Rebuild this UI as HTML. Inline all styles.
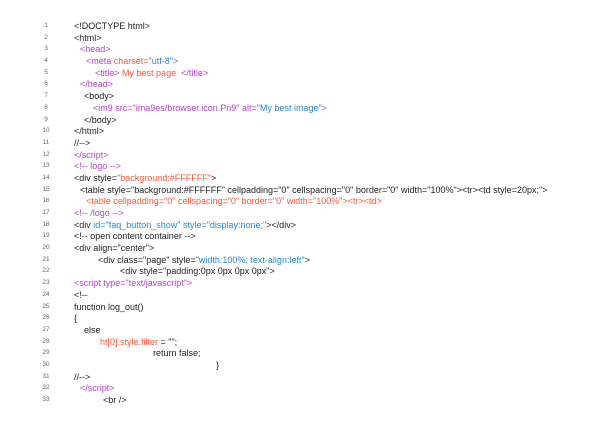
<!DOCTYPE html>
<html><head><style>
body{margin:0;width:612px;height:428px;background:#fff;overflow:hidden;font-family:"Liberation Sans",sans-serif;font-size:9px;color:#222;}
.l{position:absolute;white-space:pre;line-height:12px;}
.n{position:absolute;left:38px;width:16px;text-align:center;font-size:6.5px;color:#666;line-height:12px;}
.p{color:#b542c8}.o{color:#f25a3c}.b{color:#2a88cc}
</style></head><body>
<div id="c"></div>
<script>
var L=[
[74,'&lt;!DOCTYPE html&gt;'],
[74,'&lt;html&gt;'],
[80,'<span class="p">&lt;head&gt;</span>'],
[86,'<span class="p">&lt;meta </span><span class="o">charset=</span><span class="b">"utf-8"</span><span class="p">&gt;</span>'],
[95,'<span class="p">&lt;title&gt;</span> <span class="o">My best page</span>  <span class="p">&lt;/title&gt;</span>'],
[80,'<span class="p">&lt;/head&gt;</span>'],
[84,'&lt;body&gt;'],
[93,'<span class="p">&lt;im9 src=</span><span class="p">"ima9es/browser.icon.Pn9"</span><span class="p"> alt=</span><span class="b">"My best image"</span><span class="p">&gt;</span>'],
[84,'&lt;/body&gt;'],
[74,'&lt;/html&gt;'],
[74,'//--&gt;'],
[74,'<span class="p">&lt;/script&gt;</span>'],
[74,'<span class="p">&lt;!-- logo --&gt;</span>'],
[74,'&lt;div style=<span class="o">"background:#FFFFFF"</span>&gt;'],
[80,'&lt;table style="background:#FFFFFF" cellpadding="0" cellspacing="0" border="0" width="100%"&gt;&lt;tr&gt;&lt;td style=20px;"&gt;'],
[86,'<span class="o">&lt;table cellpadding="0" cellspacing="0" border="0" width="100%"&gt;&lt;tr&gt;&lt;td&gt;</span>'],
[74,'<span class="p">&lt;!-- /logo --&gt;</span>'],
[74,'&lt;div <span class="b">id="faq_button_show" style="display:none;"</span>&gt;&lt;/div&gt;'],
[74,'&lt;!-- open content container --&gt;'],
[74,'&lt;div align="center"&gt;'],
[98,'&lt;div class="page" style=<span class="b">"width:100%; text-align:left"</span>&gt;'],
[120,'&lt;div style="padding:0px 0px 0px 0px"&gt;'],
[74,'<span class="p">&lt;script type="text/javascript"&gt;</span>'],
[74,'&lt;!--'],
[74,'function log_out()'],
[74,'{'],
[84,'else'],
[100,'<span class="o">ht[0].style.filter</span> = "";'],
[153,'return false;'],
[216,'}'],
[74,'//--&gt;'],
[80,'<span class="p">&lt;/script&gt;</span>'],
[103,'&lt;br /&gt;']];
var h='';
for(var i=0;i<L.length;i++){var y=20+i*11.69;
h+='<div class="n" style="top:'+y+'px">'+(i+1)+'</div><div class="l" style="left:'+L[i][0]+'px;top:'+y+'px">'+L[i][1]+'</div>';}
document.getElementById('c').innerHTML=h;
</script>
</body></html>
